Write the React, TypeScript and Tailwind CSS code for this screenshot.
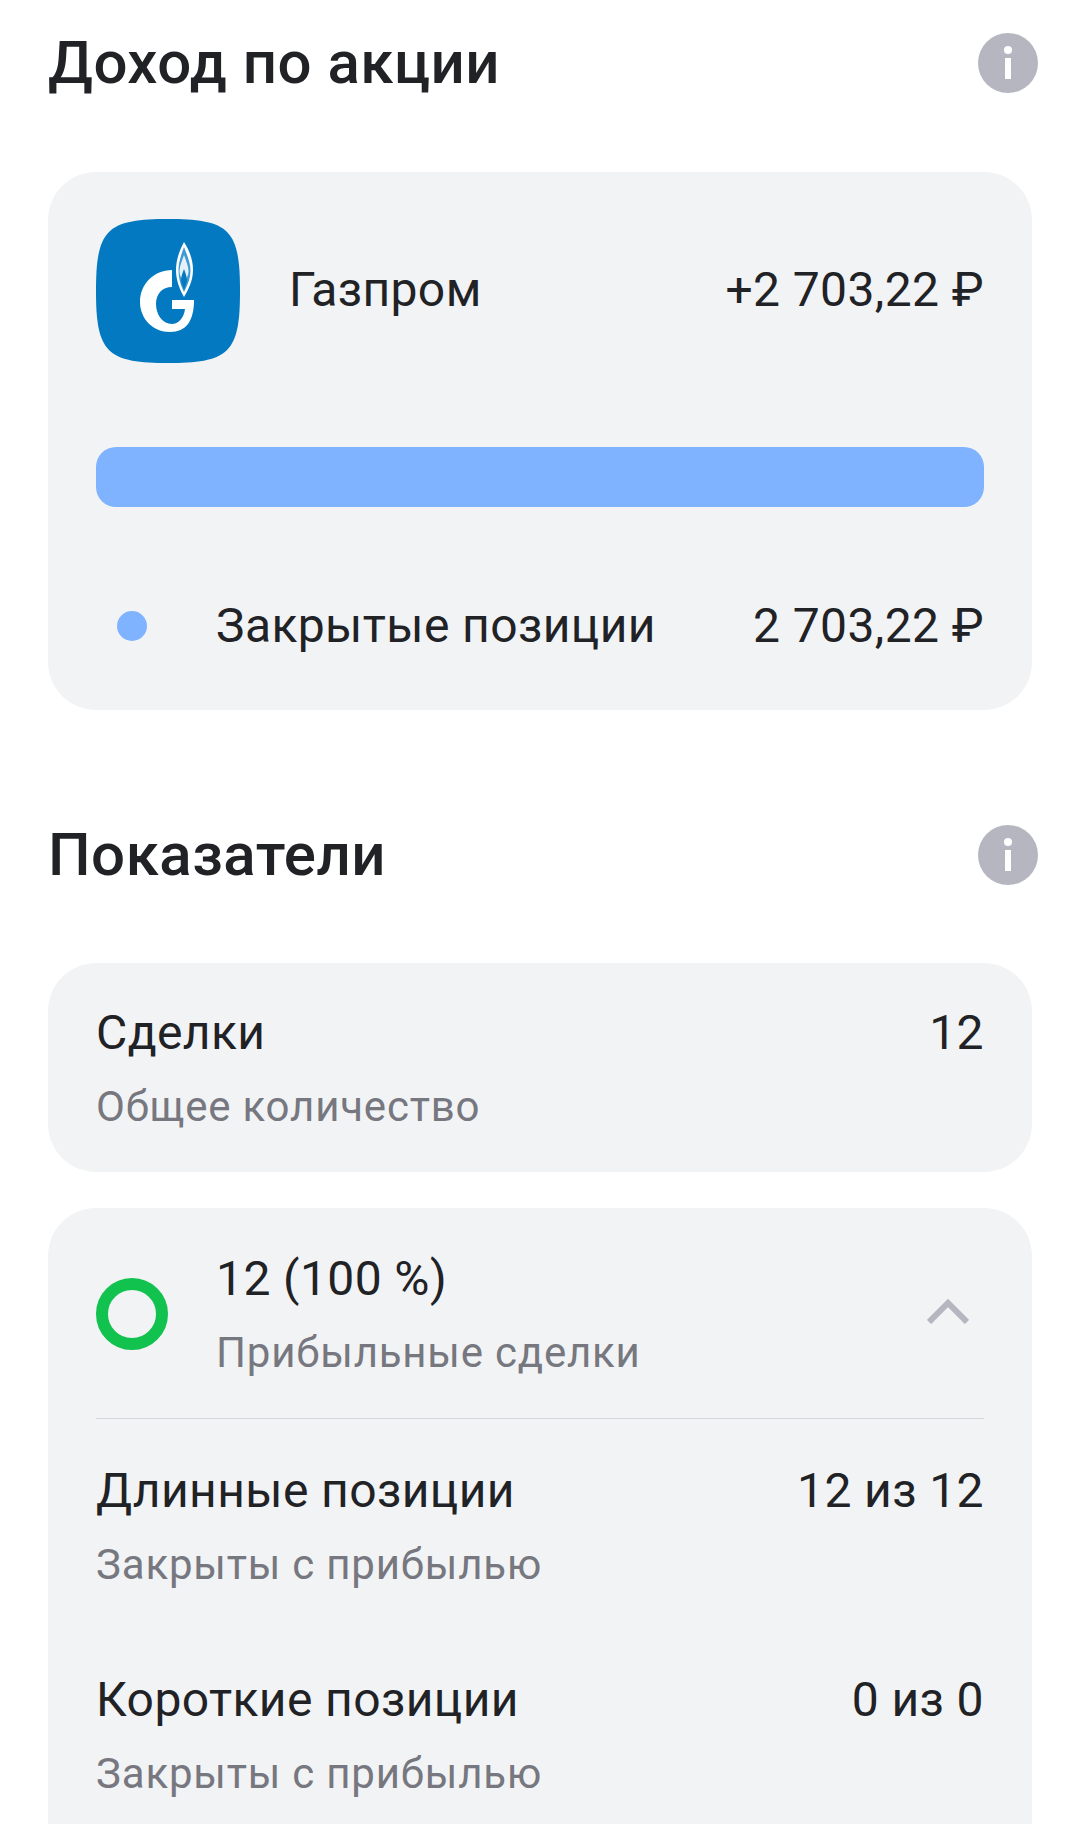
const Info = () => (
  <svg viewBox="0 0 60 60" className="h-[60px] w-[60px] shrink-0">
    <circle cx="30" cy="30" r="30" fill="#b5b6bf" />
    <circle cx="30" cy="17" r="4" fill="#fff" />
    <rect x="27" y="25" width="6" height="21" fill="#fff" />
  </svg>
)

const GazpromLogo = () => (
  <svg viewBox="0 0 144 144" className="h-[144px] w-[144px] shrink-0">
    <path d="M72 0C100 0 120 2 131 13C142 24 144 44 144 72C144 100 142 120 131 131C120 142 100 144 72 144C44 144 24 142 13 131C2 120 0 100 0 72C0 44 2 24 13 13C24 2 44 0 72 0Z" fill="#0279c1" />
    <path d="M76 51C58 51 44 65 44 83C44 100 57 113 74 113C90 113 98 102 98 81H76V90H89C88 99 82 105 76 105C66 105 60 95 60 85C60 75 66 68 76 68Z" fill="#fff" />
    <path d="M88 23C94 32 97 42 97 51C97 62 92 71 88 78C84 71 80 62 80 51C80 42 83 32 88 23Z" fill="#fff" />
    <path d="M88 28C91 36 94.500 44 94.500 51C94.500 60 91 67 88 73C85 67 82.500 60 82.500 51C82.500 44 85 36 88 28Z" fill="#3f9ad2" />
    <path d="M88 36C90 42 92.500 47 92.500 52C92.500 57 90 60 88 66C86 60 83.500 57 83.500 52C83.500 47 86 42 88 36Z" fill="#e4f1fa" />
    <path d="M88 50C89.500 54 91 58 91 61C91 64 89 67 88 71C87 67 85 64 85 61C85 58 86.500 54 88 50Z" fill="#0279c1" />
  </svg>
)

const Chevron = () => (
  <svg viewBox="0 0 42 25" className="h-[25px] w-[42px]" fill="none">
    <path d="M2 23L21 4L40 23" stroke="#b5b6bf" strokeWidth="6" />
  </svg>
)

const Stat = ({ title, sub, value }: { title: string; sub: string; value: string }) => (
  <div className="flex justify-between">
    <div>
      <div className="text-[48px] leading-[56px] tracking-[0.4px] text-[#212225]">{title}</div>
      <div className="mt-[22px] text-[42px] leading-[48px] tracking-[0.8px] text-[#76777f]">{sub}</div>
    </div>
    <div className="text-[48px] leading-[56px] tracking-[0.4px] text-[#212225]">{value}</div>
  </div>
)

export default function App() {
  return (
    <div className="h-[1824px] overflow-hidden bg-white pl-[48px] pr-[47px] font-['Roboto',sans-serif]">
      <div className="flex items-center justify-between pt-[31px]">
        <h1 className="text-[60px] font-medium leading-[64px] tracking-[0.5px] text-[#212225]">Доход по акции</h1>
        <div className="-mr-[6px]"><Info /></div>
      </div>

      <section className="mt-[77px] rounded-[48px] bg-[#f2f3f5] px-[48px] pb-[56px] pt-[47px]">
        <div className="flex items-center">
          <GazpromLogo />
          <span className="mb-[2px] ml-[49px] text-[48px] leading-[56px] tracking-[0.4px] text-[#212225]">Газпром</span>
          <span className="mb-[2px] ml-auto text-[48px] leading-[56px] tracking-[0.4px] text-[#212225]">+2 703,22 ₽</span>
        </div>
        <div className="mt-[84px] h-[60px] rounded-[20px] bg-[#7fb3ff]" />
        <div className="mt-[91px] flex items-center">
          <span className="ml-[21px] h-[30px] w-[30px] rounded-full bg-[#7fb3ff]" />
          <span className="ml-[69px] text-[48px] leading-[56px] tracking-[0.4px] text-[#212225]">Закрытые позиции</span>
          <span className="ml-auto text-[48px] leading-[56px] tracking-[0.4px] text-[#212225]">2 703,22 ₽</span>
        </div>
      </section>

      <div className="mt-[113px] flex items-center justify-between">
        <h2 className="text-[60px] font-medium leading-[64px] tracking-[0.5px] text-[#212225]">Показатели</h2>
        <div className="-mr-[6px]"><Info /></div>
      </div>

      <section className="mt-[76px] rounded-[48px] bg-[#f2f3f5] px-[48px] pb-[41px] pt-[42px]">
        <Stat title="Сделки" sub="Общее количество" value="12" />
      </section>

      <section className="mt-[36px] rounded-[48px] bg-[#f2f3f5] px-[48px] pb-[80px] pt-[43px]">
        <div className="flex items-center border-b border-[#d5d6da] pb-[41px]">
          <span className="h-[72px] w-[72px] rounded-full border-[12px] border-[#11c24f]" />
          <div className="ml-[48px]">
            <div className="text-[48px] leading-[56px] tracking-[0.4px] text-[#212225]">12 (100 %)</div>
            <div className="mt-[22px] text-[42px] leading-[48px] tracking-[0.8px] text-[#76777f]">Прибыльные сделки</div>
          </div>
          <div className="mb-[5px] ml-auto mr-[15px]"><Chevron /></div>
        </div>
        <div className="mt-[44px]">
          <Stat title="Длинные позиции" sub="Закрыты с прибылью" value="12 из 12" />
        </div>
        <div className="mt-[83px]">
          <Stat title="Короткие позиции" sub="Закрыты с прибылью" value="0 из 0" />
        </div>
      </section>
    </div>
  )
}
